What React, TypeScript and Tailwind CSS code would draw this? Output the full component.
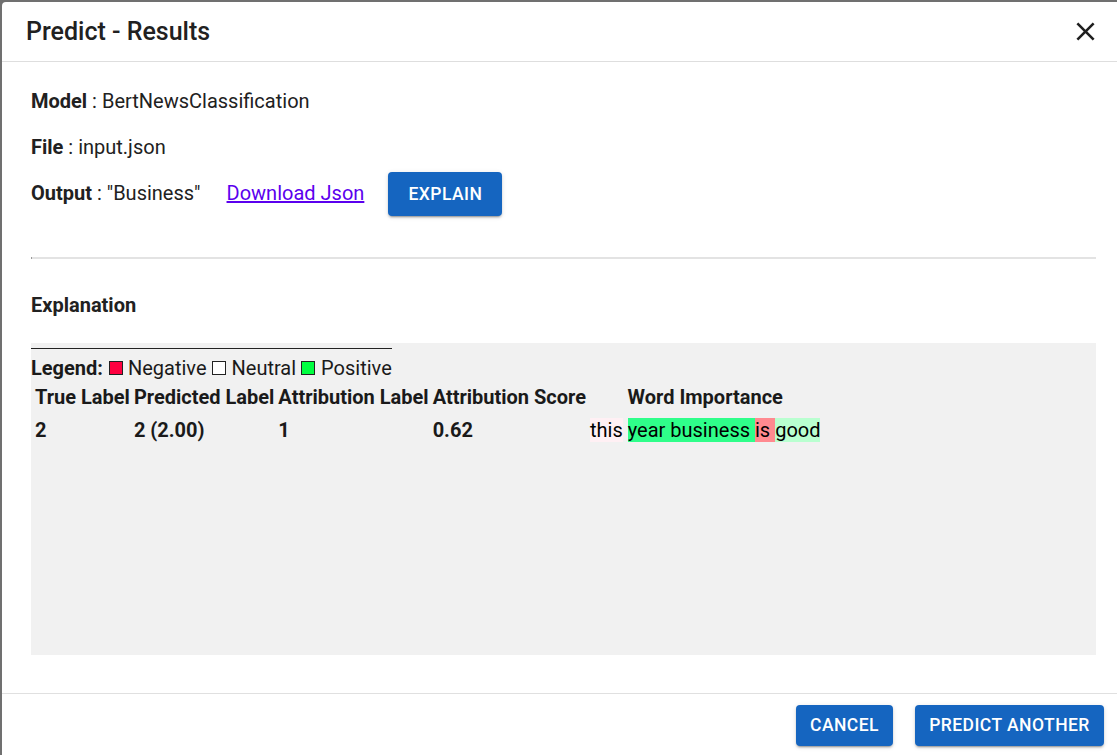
import React from "react";

type Word = {
  text: string;
  color: string;
};

const words: Word[] = [
  { text: "year business ", color: "bg-[#2ffe8a]" },
  { text: "is ", color: "bg-[#ff8a90]" },
  { text: "good", color: "bg-[#b9ffd0]" },
];

function Field(props: { label: string; value: string; children?: React.ReactNode }) {
  return (
    <div className="h-[46px] flex items-center">
      <p className="text-[20px] text-[#212121]">
        <span className="font-bold">{props.label}</span> : {props.value}
      </p>
      {props.children}
    </div>
  );
}

function BlueButton(props: { label: string; className?: string }) {
  return (
    <button
      className={
        "bg-[#1565c0] text-white text-[17.5px] font-medium uppercase tracking-[0.45px] rounded-[4px] shadow-[0_3px_1px_-2px_rgba(0,0,0,0.2),0_2px_2px_0_rgba(0,0,0,0.14),0_1px_5px_0_rgba(0,0,0,0.12)] " +
        (props.className || "")
      }
    >
      {props.label}
    </button>
  );
}

export default function App() {
  return (
    <div
      className="w-[1117px] h-[755px] overflow-hidden bg-[#707070] pl-[2px] pt-[2px]"
      style={{ fontFamily: "Roboto, 'Liberation Sans', sans-serif" }}
    >
      <div className="w-[1123px] bg-white rounded-tl-[4px] flex flex-col text-[#212121]">
        <header className="h-[60px] flex items-center justify-between pl-6 pr-[24px] border-b border-[#dedede]">
          <h2 className="text-[25px] font-medium">Predict - Results</h2>
          <svg width="31" height="31" viewBox="0 0 24 24" fill="#1f1f1f">
            <path d="M19 6.41 17.59 5 12 10.59 6.41 5 5 6.41 10.59 12 5 17.59 6.41 19 12 13.41 17.59 19 19 17.59 13.41 12z" />
          </svg>
        </header>

        <div className="px-[29px] pt-[16px]">
          <Field label="Model" value="BertNewsClassification" />
          <Field label="File" value="input.json" />
          <Field label="Output" value={'"Business"'}>
            <a href="#" className="ml-[26px] text-[20px] text-[#5b00ee] underline">
              Download Json
            </a>
            <BlueButton label="Explain" className="ml-[24px] h-[44px] w-[114px] mt-[2px]" />
          </Field>

          <div className="mt-[41px] h-[2px] bg-[#e3e3e3] border-l border-[#9a9a9a]" />

          <h3 className="mt-[35px] text-[20px] font-bold leading-[23px]">Explanation</h3>

          <div className="mt-[26px] h-[312px] bg-[#f1f1f1] text-[20px] text-[#1a1a1a]">
            <div className="pt-[5px] flex">
              <div className="flex items-center h-[34px] pt-[5px] border-t border-[#222]">
                <b>Legend:</b>
                <span className="ml-[6px] inline-block w-[14px] h-[14px] border border-[#222] bg-[#ff0040]" />
                <span className="ml-[5px]">Negative</span>
                <span className="ml-[5px] inline-block w-[14px] h-[14px] border border-[#222] bg-white" />
                <span className="ml-[6px]">Neutral</span>
                <span className="ml-[5px] inline-block w-[14px] h-[14px] border border-[#222] bg-[#00ff40]" />
                <span className="ml-[6px]">Positive</span>
              </div>
            </div>
            <table className="ml-[1px] border-separate border-spacing-[2px] whitespace-nowrap leading-[24px]">
              <tbody>
                <tr className="h-[26px]">
                  <th className="p-[1px] font-bold">True Label</th>
                  <th className="p-[1px] font-bold">Predicted Label</th>
                  <th className="p-[1px] font-bold">Attribution Label</th>
                  <th className="p-[1px] font-bold">Attribution Score</th>
                  <th className="p-[1px] font-bold">Word Importance</th>
                </tr>
                <tr className="h-[36px]">
                  <td className="p-[1px] font-bold text-left">2</td>
                  <td className="p-[1px] font-bold text-left">2 (2.00)</td>
                  <td className="p-[1px] font-bold text-left">1</td>
                  <td className="p-[1px] font-bold text-left">0.62</td>
                  <td className="p-[1px] text-left text-black">
                    <span className="bg-[#fff0f4]">this</span>{" "}
                    {words.map((w, i) => (
                      <span key={i} className={w.color}>
                        {w.text}
                      </span>
                    ))}
                  </td>
                </tr>
              </tbody>
            </table>
          </div>
        </div>

        <footer className="mt-[38px] border-t border-[#e0e0e0] flex justify-end gap-[22px] pt-[11px] pb-[12px] pr-[21px]">
          <BlueButton label="Cancel" className="h-[41px] w-[97px]" />
          <BlueButton label="Predict Another" className="h-[41px] w-[189px]" />
        </footer>
      </div>
    </div>
  );
}
